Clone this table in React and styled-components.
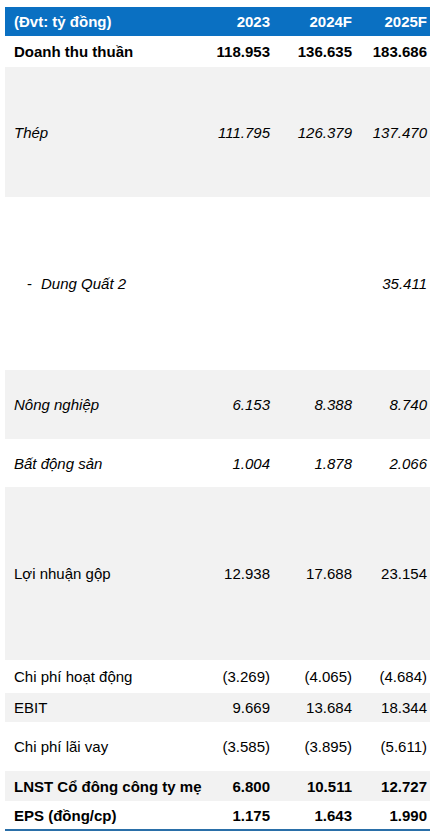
import styled, { createGlobalStyle } from "styled-components";

const GlobalStyle = createGlobalStyle`
  body {
    margin: 0;
    background: #ffffff;
    font-family: "Liberation Sans", Arial, sans-serif;
    color: #000000;
  }
`;

const Page = styled.div`
  padding: 7px 4px 0 5px;
`;

const Table = styled.div`
  width: 425px;
  border-bottom: 2px solid #2a6fa8;
`;

const Row = styled.div`
  display: grid;
  grid-template-columns: 190px 78px 82px 75px;
  align-items: center;
  height: ${(p) => p.h}px;
  background: ${(p) => (p.head ? "#0a70c2" : p.shade ? "#f2f2f2" : "#ffffff")};
  color: ${(p) => (p.head ? "#ffffff" : "#000000")};
  font-size: 15px;
  font-weight: ${(p) => (p.bold || p.head ? 700 : 400)};
  font-style: ${(p) => (p.italic ? "italic" : "normal")};
`;

const Label = styled.div`
  padding-left: ${(p) => (p.sub ? 22 : 9)}px;
  white-space: nowrap;
`;

const Dash = styled.span`
  display: inline-block;
  width: 14px;
  font-style: normal;
`;

const Num = styled.div`
  text-align: right;
  padding-right: 3px;
  white-space: nowrap;
`;

const rows = [
  { label: "(Đvt: tỷ đồng)", v: ["2023", "2024F", "2025F"], h: 29, head: true },
  { label: "Doanh thu thuần", v: ["118.953", "136.635", "183.686"], h: 31, bold: true },
  { label: "Thép", v: ["111.795", "126.379", "137.470"], h: 130, shade: true, italic: true },
  { label: "Dung Quất 2", v: ["", "", "35.411"], h: 173, italic: true, sub: true },
  { label: "Nông nghiệp", v: ["6.153", "8.388", "8.740"], h: 69, shade: true, italic: true },
  { label: "Bất động sản", v: ["1.004", "1.878", "2.066"], h: 48, italic: true },
  { label: "Lợi nhuận gộp", v: ["12.938", "17.688", "23.154"], h: 173, shade: true },
  { label: "Chi phí hoạt động", v: ["(3.269)", "(4.065)", "(4.684)"], h: 33 },
  { label: "EBIT", v: ["9.669", "13.684", "18.344"], h: 29, shade: true },
  { label: "Chi phí lãi vay", v: ["(3.585)", "(3.895)", "(5.611)"], h: 49 },
  { label: "LNST Cổ đông công ty mẹ", v: ["6.800", "10.511", "12.727"], h: 30, shade: true, bold: true },
  { label: "EPS (đồng/cp)", v: ["1.175", "1.643", "1.990"], h: 28, bold: true },
];

export default function App() {
  return (
    <>
      <GlobalStyle />
      <Page>
        <Table>
          {rows.map((r) => (
            <Row key={r.label} h={r.h} head={r.head} shade={r.shade} bold={r.bold} italic={r.italic}>
              <Label sub={r.sub}>
                {r.sub && <Dash>-</Dash>}
                {r.label}
              </Label>
              {r.v.map((x, i) => (
                <Num key={i}>{x}</Num>
              ))}
            </Row>
          ))}
        </Table>
      </Page>
    </>
  );
}
